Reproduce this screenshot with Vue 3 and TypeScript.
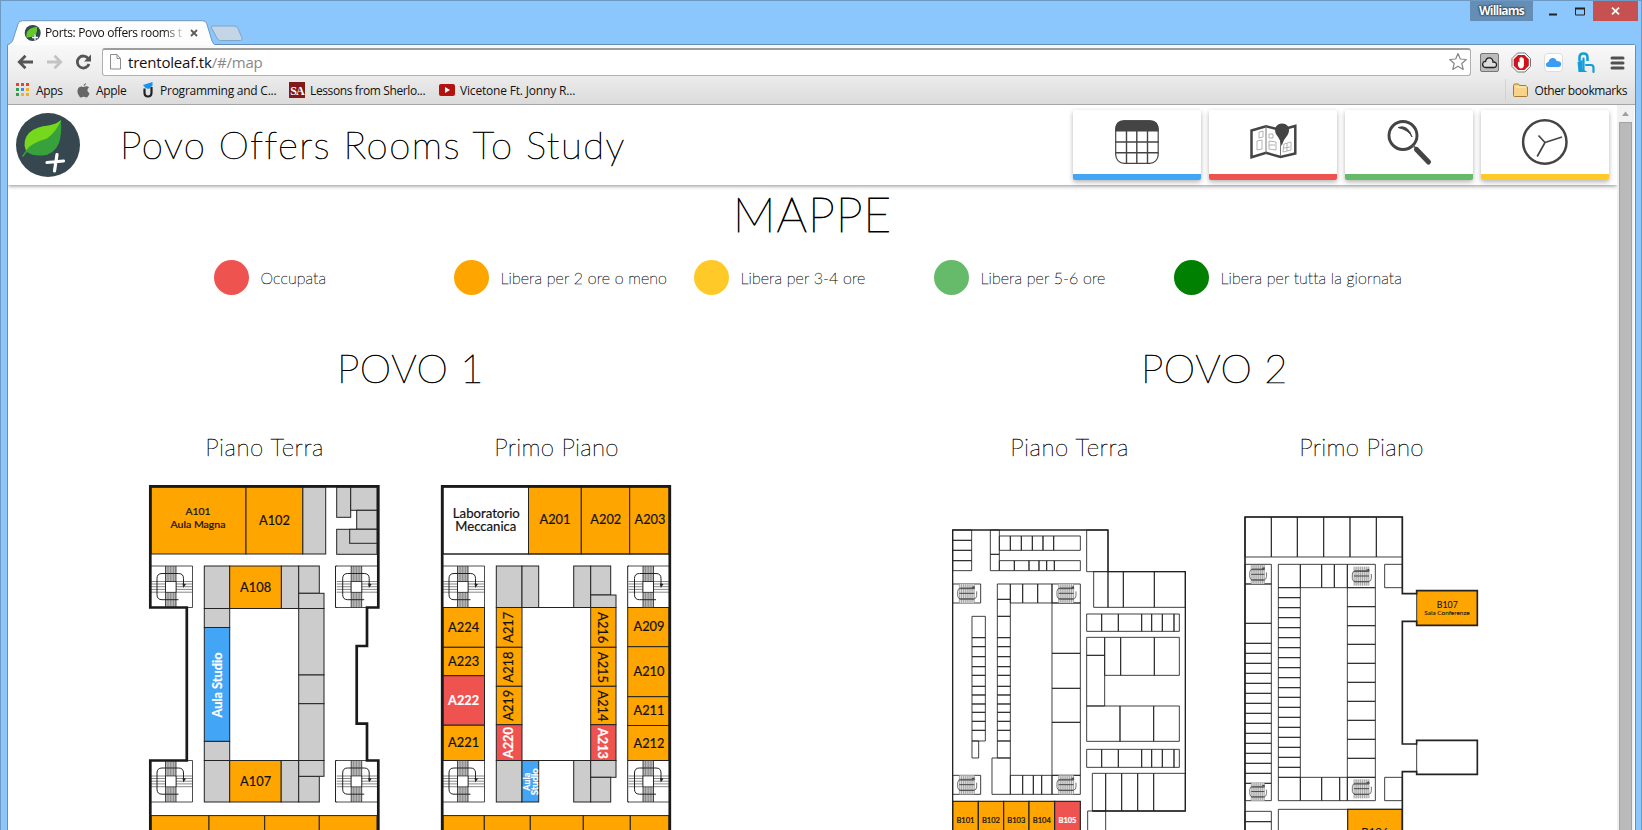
<script setup lang="ts">
type Box = [number, number, number, number]
interface Label {
  t: string
  x: number
  y: number
  w: number
  s?: number
  r?: number
  c?: string
}
interface Fill {
  b: Box
  k: string
}

const legend = [
  { k: 'red', t: 'Occupata' },
  { k: 'orange', t: 'Libera per 2 ore o meno' },
  { k: 'yellow', t: 'Libera per 3-4 ore' },
  { k: 'lime', t: 'Libera per 5-6 ore' },
  { k: 'green', t: 'Libera per tutta la giornata' },
]

const fills = (k: string, list: Box[]): Fill[] => list.map((b) => ({ b, k }))

/* Splits a strip into adjoining boxes at the given stops. */
const rows = (x1: number, x2: number, ys: number[]): Box[] =>
  ys.slice(1).map((y, i) => [x1, ys[i], x2, y] as Box)
const cols = (y1: number, y2: number, xs: number[]): Box[] =>
  xs.slice(1).map((x, i) => [xs[i], y1, x, y2] as Box)
const path = (list: Box[]): string =>
  list.map(([a, b, c, d]) => `M${a} ${b}H${c}V${d}H${a}Z`).join('')

/* Povo 1, ground floor */
const a0: Fill[] = [
  ...fills('grey', [
    [302.7, 487, 325.7, 554], [336.7, 487, 350.7, 517.3], [350.7, 487, 377, 510.3],
    [356.7, 510.3, 377, 529.3], [336.7, 529.3, 377, 554.3], [349.7, 529.3, 377, 543.3],
    [204.3, 566, 229.7, 608.5], [281.3, 566, 298.7, 608.5], [298.7, 566, 319.3, 593.3],
    [204.3, 608.5, 229.7, 627.5], [204.3, 741.3, 229.7, 760.5], [204.3, 760.5, 229.7, 802],
    [281, 760.5, 298.7, 802], [298.7, 776.3, 319.3, 802],
    ...rows(298.7, 324, [593.3, 608.5, 675, 703.7, 760.5, 776.3]),
  ]),
  ...fills('orange', [
    [151, 487, 246, 554], [246, 487, 302.7, 554], [229.7, 566, 281.3, 608.5],
    [229.7, 760.5, 281, 802], ...cols(815.6, 840, [151, 209, 264.7, 319.3, 377]),
  ]),
  ...fills('blue', [[204.3, 627.5, 229.7, 741.3]]),
]
const a0Labels: Label[] = [
  { t: 'A101', x: 198, y: 515, w: 25, s: 10 },
  { t: 'Aula Magna', x: 198, y: 528.3, w: 55, s: 10 },
  { t: 'A102', x: 274.5, y: 525.2, w: 31 },
  { t: 'A108', x: 255.6, y: 592.2, w: 31 },
  { t: 'A107', x: 255.6, y: 786.2, w: 31 },
  { t: 'Aula Studio', x: 222, y: 685, w: 65, r: -90, c: 'lit' },
]

/* Povo 1, first floor */
const inner = [607.5, 647.3, 686.3, 724.7]
const a1: Fill[] = [
  ...fills('grey', [
    [496.3, 566, 522, 607.5], [522, 566, 538.7, 607.5], [573.7, 566, 590.7, 607.5],
    [590.7, 566, 610.7, 595], [590.7, 595, 616, 607.5], [496.3, 760.5, 522, 802],
    [573.7, 760.5, 590.7, 802], [590.7, 760.5, 616, 777.3], [590.7, 777.3, 610.7, 802],
  ]),
  ...fills('white', [[443, 487, 528.5, 554]]),
  ...fills('orange', [
    ...cols(487, 554, [528.5, 581.3, 629.7, 669]),
    ...rows(443, 484.5, [607.5, 647.3, 675.7]), [443, 725, 484.5, 760.5],
    ...rows(496.3, 522, inner), ...rows(590.7, 616, inner),
    ...rows(627.7, 669, [607.5, 646.7, 696.7, 725.5, 760.5]),
    ...cols(815.6, 840, [443, 484.3, 530.3, 583.3, 630.3, 669]),
  ]),
  ...fills('red', [[443, 675.7, 484.5, 725], [496.3, 724.7, 522, 760.5], [590.7, 724.7, 616, 760.5]]),
  ...fills('blue', [[522, 760.5, 538.7, 802]]),
]
const a1Labels: Label[] = [
  { t: 'Laboratorio', x: 486.3, y: 518, w: 67, s: 13.4 },
  { t: 'Meccanica', x: 485.8, y: 530.6, w: 61, s: 13.4 },
  { t: 'A201', x: 555, y: 523.9, w: 31 },
  { t: 'A202', x: 605.8, y: 523.9, w: 31 },
  { t: 'A203', x: 650, y: 523.9, w: 31 },
  { t: 'A224', x: 463.6, y: 632, w: 31 },
  { t: 'A223', x: 463.6, y: 666, w: 31 },
  { t: 'A222', x: 463.6, y: 704.7, w: 31, c: 'lit' },
  { t: 'A221', x: 463.6, y: 746.8, w: 31 },
  { t: 'A209', x: 649, y: 631, w: 31 },
  { t: 'A210', x: 649, y: 676, w: 31 },
  { t: 'A211', x: 649, y: 715, w: 31 },
  { t: 'A212', x: 649, y: 747.8, w: 31 },
  { t: 'A217', x: 513, y: 627.3, w: 31, r: -90 },
  { t: 'A218', x: 513, y: 667, w: 31, r: -90 },
  { t: 'A219', x: 513, y: 705.3, w: 31, r: -90 },
  { t: 'A220', x: 513, y: 742.7, w: 31, r: -90, c: 'lit' },
  { t: 'A216', x: 598.3, y: 627.7, w: 31, r: 90 },
  { t: 'A215', x: 598.3, y: 667.5, w: 31, r: 90 },
  { t: 'A214', x: 598.3, y: 706, w: 31, r: 90 },
  { t: 'A213', x: 598.3, y: 743.5, w: 31, r: 90, c: 'lit' },
  { t: 'Aula', x: 530.3, y: 781.7, w: 18, s: 9.5, r: -90, c: 'lit' },
  { t: 'Studio', x: 538, y: 781.7, w: 27, s: 9.5, r: -90, c: 'lit' },
]

/* Povo 2 plans are drawn on a grid of a third of a pixel. */
const spine = [289, 353, 380, 410, 440, 466, 499, 525, 552, 577, 604, 631, 663]
const strip = [440, 485, 535, 605, 635, 667, 702, 718]
const b0 = path([
  ...rows(38, 95, [30, 61, 91, 122, 152]),
  ...rows(151, 178, [30, 103, 152]),
  ...cols(48, 91, [178, 211, 244, 277, 309, 341, 421]),
  ...cols(122, 152, [178, 223, 267, 297, 320, 343, 421]),
  [440, 30, 504, 155],
  ...cols(155, 262, [461, 504, 550, 643, 736]),
  [38, 192, 122, 249],
  ...rows(172, 211, [192, 238, ...spine, 714]),
  ...cols(192, 249, [211, 248, 293, 336, 421]),
  ...rows(336, 421, [249, 400, 505, 607, 766, 823]),
  ...rows(96, 136, spine),
  [96, 663, 116, 714], [156, 714, 211, 823], [38, 766, 122, 823],
  ...cols(766, 823, [211, 248, 280, 305, 336]),
  ...cols(282, 334, strip), ...cols(688, 742, strip),
  ...cols(352, 466, [494, 542, 643, 718]),
  ...rows(440, 494, [352, 406, 558]),
  ...cols(558, 664, [440, 540, 641, 718]),
  ...cols(760, 873, [457, 497, 545, 593, 641, 736]),
  [443, 873, 497, 960],
])
const b0Rooms = cols(844, 960, [38, 115, 191, 267, 344, 421])

const cells: number[] = []
for (let y = 248; y <= 818; y += 29.95) cells.push(Math.round(y))
const b1 = path([
  ...cols(36, 156, [30, 109, 187, 266, 345, 424, 502]),
  ...rows(30, 109, [178, 237, 355, 415, 445, 475, 505, 535, 565, 595, 625, 655, 685, 715, 745, 775, 805, 835, 887]),
  ...rows(30, 109, [919, 950, 990]),
  ...rows(130, 196, [178, ...cells, 887]),
  ...cols(178, 248, [196, 260, 298, 337, 421]),
  [449, 178, 502, 248], [449, 817, 502, 887],
  ...rows(337, 421, [248, 305, 362, 418, 475, 532, 589, 646, 703, 760, 817]),
  ...cols(817, 887, [196, 260, 314, 337, 421]),
  [130, 913, 502, 990],
])

const stripes = [0, 1, 2, 3, 4, 5, 6, 7]
</script>

<template>
  <div class="window">
    <header class="frame">
      <svg class="tabs" width="260" height="45" viewBox="0 0 260 45">
        <path d="M211.5 28q-.5-2 1.500-2H234q3 0 4 2.500L242 38q.8 2.500-1.500 2.500H220.500q-2.500 0-3.500-2.500Z" fill="#c4d6e6" stroke="#7fa5c8" />
        <path d="M6 45.500Q11 44 12.500 41L18 24q1-3.300 4.500-3.300H202.500q3.300 0 4.300 3L212 41q1 3.500 5 4.500Z" fill="#fdfdfd" stroke="#6e97bd" />
        <circle cx="32.700" cy="33" r="8" fill="#37474f" />
        <path d="M26.500 36.500q-1-8.500 10.500-9.500q1 9-6 10Q28 37 26.500 38Z" fill="#63c92a" />
        <path d="M32 37.500h6M35 34.500v6" stroke="#fff" stroke-width="1.300" />
        <path d="M191 30l6 6M197 30l-6 6" stroke="#5a5a5a" stroke-width="1.800" />
      </svg>
      <span class="tab-title">Ports: Povo offers rooms t</span>
      <div class="controls">
        <span class="user">Williams</span>
        <svg width="60" height="20" viewBox="0 0 60 20">
          <path d="M16 13.500h8" stroke="#222" stroke-width="2" />
          <path d="M42.500 7.500h9v6.500h-9z" fill="none" stroke="#222" /><path d="M42 7.500h10" stroke="#222" stroke-width="2" />
        </svg>
        <span class="close">
          <svg width="9" height="8" viewBox="0 0 9 8"><path d="M1 .7l7 6.600M8 .7L1 7.300" stroke="#fff" stroke-width="1.800" /></svg>
        </span>
      </div>
    </header>

    <div class="shell">
      <div class="toolbar">
        <svg width="92" height="28" viewBox="8 0 92 28">
          <g fill="none" stroke-width="2.800">
            <path d="M33 14H20M25.500 7.800L19.300 14l6.200 6.200" stroke="#555" />
            <path d="M47 14H60M54.500 7.800L60.700 14l-6.200 6.200" stroke="#c3c3c3" />
            <path d="M88.200 10.500A6 6 0 1 0 89 16" stroke="#555" />
          </g>
          <path d="M91 6.500v7h-7z" fill="#555" />
        </svg>
        <div class="omni">
          <svg width="13" height="18" viewBox="0 0 13 18"><path d="M1.500 1.500h6.500l3.500 4v10.500h-10zM8 1.500v4h3.500" fill="#fcfcfc" stroke="#8c8c8c" /></svg>
          <span class="url">trentoleaf.tk<i>/#/map</i></span>
          <svg width="20" height="19" viewBox="0 0 20 19"><path d="M10 1.500l2.300 5.500 6 .5-4.500 4 1.400 5.900L10 14.200l-5.200 3.200 1.400-5.900-4.500-4 6-.5z" fill="#fff" stroke="#888" stroke-width="1.200" stroke-linejoin="round" /></svg>
        </div>
        <svg class="ext" width="160" height="24" viewBox="1474 0 160 24">
          <rect x="1480.500" y="2.500" width="18" height="18" rx="1.500" fill="#bcbcbc" stroke="#777" />
          <path d="M1484 16q-2.500-2-.5-5 1.500-.8 2-.5 1-4.500 5-3.500 2.500 1 2.500 4 4 0 3.500 3.500-.5 2-2.500 2h-8q-1 0-2-.5Z" fill="#ddd" stroke="#222" stroke-width="1.300" />
          <path d="M1517.500 2h7.500l5.500 5.500v8l-5.500 5.500h-7.500l-5.500-5.500v-8z" fill="#fff" stroke="#777" />
          <path d="M1518 4h6.500l4.300 4.300v6.400l-4.300 4.300H1518l-4.300-4.300V8.300z" fill="#d3131b" />
          <path d="M1518 10.500l1.500 1v-4.500h1v3.500V6h1.200v4.500V6.500h1v4V7.500h1.200v7q-.5 3-3 3-2 0-3-3z" fill="#fff" />
          <rect x="1544.500" y="2.500" width="18" height="18" rx="3.500" fill="#fff" stroke="#ddd" />
          <path d="M1547.500 16q-2-.5-1.500-3 .8-2 2.500-2 1-4.500 5-4 2.500.7 3.200 3 4.500 0 4.500 3.300 0 2.500-2.500 2.700z" fill="#3b9cf4" />
          <path d="M1579.500 10V6.500q0-4 4-4t4 4V10" fill="none" stroke="#159ddb" stroke-width="2.600" />
          <path d="M1583.500 19V7.500M1586 14h5q2.500 0 2.500 3V21" fill="none" stroke="#159ddb" stroke-width="2.200" stroke-linecap="round" />
          <path d="M1577.500 11l5-2v9l5 3h-9z" fill="#159ddb" />
          <path d="M1612 7h11M1612 12h11M1612 17h11" stroke="#505050" stroke-width="3" stroke-linecap="round" />
        </svg>
      </div>

      <div class="marks">
        <span class="mark m1">
          <svg width="14" height="14" viewBox="0 0 14 14">
            <path d="M0 0h3v3H0zM5 0h3v3H5zM10 0h3v3h-3z" fill="#e2443a" />
            <path d="M0 5h3v3H0z" fill="#2f9e4f" /><path d="M5 5h3v3H5z" fill="#3f86ee" /><path d="M10 5h3v3h-3z" fill="#f2b01e" />
            <path d="M0 10h3v3H0z" fill="#2f9e4f" /><path d="M5 10h3v3H5zM10 10h3v3h-3z" fill="#f2b01e" />
          </svg><b>Apps</b>
        </span>
        <span class="mark m2">
          <svg width="13" height="15" viewBox="0 0 13 15"><path d="M6.500 4Q8.500 3 10 3.300q1.500.3 2 1.300-3.500 2.500.5 5.900-1 3-2.700 4-1 0-1.800-.4-1.300-.6-2.700 0-1.500.8-2.500-.2Q-1 9.500 1.300 5q2-2.500 5.200-1ZM6.500 3.300Q6.500.8 9 0 9 2.500 6.500 3.300Z" fill="#666" /></svg><b>Apple</b>
        </span>
        <span class="mark m3">
          <svg width="12" height="16" viewBox="0 0 12 16"><path d="M2.500 6.500v4q0 4 3.500 4t3.500-4V5" fill="none" stroke="#222" stroke-width="2.200" /><path d="M1 3L10.500 0v3.500L7 7 3.500 6z" fill="#1793ee" /></svg><b>Programming and C...</b>
        </span>
        <span class="mark m4"><em>SA</em><b>Lessons from Sherlo...</b></span>
        <span class="mark m5">
          <svg width="16" height="12" viewBox="0 0 16 12"><rect width="16" height="12" rx="2" fill="#b3120e" /><path d="M6 3l5 3-5 3z" fill="#fff" /></svg><b>Vicetone Ft. Jonny R...</b>
        </span>
        <span class="mark other">
          <svg width="16" height="14" viewBox="0 0 16 14"><path d="M.5 12.500V2.500Q.5 1 2 1h3.500l1 1.500H13V4h1.500v8.500q0 1-1 1h-12q-1 0-1-1z" fill="#f7d387" stroke="#a87b35" /><path d="M3 4h11" stroke="#fff0c4" /></svg><b>Other bookmarks</b>
        </span>
      </div>

      <div class="body">
        <main class="page">
          <div class="banner">
            <svg class="logo" width="64" height="64" viewBox="0 0 64 64">
              <circle cx="32" cy="32" r="32" fill="#37474f" />
              <path d="M6 43L10 37.500Q6 28 13 20 21 13 33 12.500 41 11 45 7 46 20 43 30 38 42 26 42.500 16 43 11 39L7 44Z" fill="#37a23c" />
              <path d="M10 37.500Q6 28 13 20 21 13 33 12.500 41 11 45 7 41 18 31 25.500 15 30 10 37.500Z" fill="#76d81c" />
              <path d="M31 49.500l16.500-1.500M41 41.500l-2.500 16.500" stroke="#fff" stroke-width="3.200" stroke-linecap="round" />
            </svg>
            <h1>Povo Offers Rooms To Study</h1>
            <nav>
              <a class="n-blue"><svg width="128" height="64" viewBox="0 0 128 64">
                <rect x="42.700" y="10.800" width="42.500" height="42.500" rx="8.500" fill="#fff" stroke="#444" stroke-width="1.200" />
                <path d="M42.200 21.500v-2q0-9.200 9-9.200h25.500q9 0 9 9.200v2z" fill="#444" />
                <path d="M53.500 21v32M63.800 21v32M74.500 21v32M42.500 32h43M42.500 42.700h43" stroke="#444" stroke-width="1.400" />
              </svg></a>
              <a class="n-red"><svg width="128" height="64" viewBox="0 0 128 64">
                <path d="M42.500 20.500L57 16.300 71.500 20 86.300 16v27.500L71.500 47 57 42.800l-14.500 4.400z" fill="#fff" stroke="#444" stroke-width="2.500" />
                <path d="M57 16v27M71.500 30v16" stroke="#777" />
                <path d="M50 22l4-1v6l-4 1zM60 24h4v4h-4zM48 31l5-1v9l-5 1zM60 31l7 1v8l-7-1zM60 35h6M75 34l7-2v8l-8 2zM78 33v8M75 38l6-1" fill="none" stroke="#aaa" stroke-width=".9" />
                <path d="M72.600 36q-1.500-7-5-11-3-5-.5-8.500 2-3 6-3t6 3q2 4-.5 8.500-4.500 5-6 11z" fill="#444" />
              </svg></a>
              <a class="n-green"><svg width="128" height="64" viewBox="0 0 128 64">
                <circle cx="58" cy="25.500" r="14" fill="none" stroke="#444" stroke-width="2.900" />
                <path d="M53 17.500Q63 14 67 27q-3-7-14-9.500z" fill="#444" stroke="#444" stroke-linejoin="round" />
                <path d="M68 35.500l3 3" stroke="#666" stroke-width="2" /><path d="M71.500 39.500L83.500 52" stroke="#444" stroke-width="5" stroke-linecap="round" />
              </svg></a>
              <a class="n-yellow"><svg width="128" height="64" viewBox="0 0 128 64">
                <circle cx="63.800" cy="32" r="21.700" fill="none" stroke="#444" stroke-width="2.500" />
                <path d="M64 32.500l17-5.500M64 32.500l-6.500-7M64 32.500l-7.800 14" stroke="#444" stroke-width="1.700" />
              </svg></a>
            </nav>
          </div>

          <h2>MAPPE</h2>
          <ul class="legend">
            <li v-for="l in legend" :key="l.k"><i :class="'dot-' + l.k"></i>{{ l.t }}</li>
          </ul>

          <div class="buildings">
            <section>
              <h3>POVO 1</h3>
              <div class="floors">
                <figure>
                  <figcaption>Piano Terra</figcaption>
                  <svg class="plan" width="292" height="355" viewBox="118 475 292 355">
                    <defs>
                      <symbol id="stairs" width="42" height="42" viewBox="0 0 42 42" overflow="visible">
                        <path d="M14.500 0H25v41.500H14.500z" fill="#b5b5b5" />
                        <path d="M17 0v41.500M19.700 0v41.500M22.400 0v41.500" stroke="#777" stroke-width=".7" />
                        <path d="M0 15.500h14.500M25 15.500h16.500M0 18h14.500M25 18h16.500M0 20.700h14.500M25 20.700h16.500M0 23.400h14.500M25 23.400h16.500M0 26.200h14.500M25 26.200h16.500" stroke="#555" stroke-width=".7" />
                        <path d="M14.500 15.500H25v10.800H14.500zM25 0v41.500M14.500 0v41.500M0 0h41.500v41.500H0" fill="none" stroke="#222" stroke-width=".8" />
                        <path d="M15 16h9.500v9.800H15z" fill="#fff" />
                        <path d="M27.500 33.700H11q-5 0-5-5V12.500q0-5 5-5h16.500q5 0 5 5V20" fill="none" stroke="#222" />
                        <path d="M31.500 17.500l.8 4.500 2.700-4z" fill="#222" />
                      </symbol>
                      <symbol id="steps" width="84" height="58" viewBox="0 0 84 58" overflow="visible">
                        <path d="M20 0h45v57H20z" fill="#ddd" />
                        <path v-for="n in stripes" :key="n" :d="`M${20 + n * 6.400} 0v57`" stroke="#888" stroke-width="2" />
                        <path d="M20 14h45M20 28h45M20 45h45" stroke="#333" stroke-width="2.600" />
                        <path d="M62 12H24q-9 2-9 10v14q1 8 9 9h40q8-2 8-10V22" fill="none" stroke="#555" stroke-width="2.500" />
                        <path d="M56 10l11 4-2-8z" fill="#444" />
                      </symbol>
                    </defs>
                    <rect v-for="(f, i) in a0" :key="i" :class="['cell', f.k]" :x="f.b[0]" :y="f.b[1]" :width="f.b[2] - f.b[0]" :height="f.b[3] - f.b[1]" />
                    <use href="#stairs" x="151" y="566" /><use href="#stairs" x="336.700" y="566" />
                    <use href="#stairs" x="151" y="760.500" /><use href="#stairs" x="336.700" y="760.500" />
                    <path class="thin" d="M337 566H335.500V607.500H337M337 760.500H335.500V802H337" />
                    <path class="wall" d="M150.300 840V760.500H186.800V607.500H150.300V486.300H378.300V607.500H367V646H356.700V723.700H367V760.500H378.300V840" />
                    <text v-for="l in a0Labels" :key="l.t" :class="l.c" :font-size="l.s ?? 14" :textLength="l.w" lengthAdjust="spacingAndGlyphs" :transform="`translate(${l.x} ${l.y}) rotate(${l.r ?? 0})`">{{ l.t }}</text>
                  </svg>
                </figure>
                <figure>
                  <figcaption class="first">Primo Piano</figcaption>
                  <svg class="plan" width="292" height="355" viewBox="410 475 292 355">
                    <rect v-for="(f, i) in a1" :key="i" :class="['cell', f.k]" :x="f.b[0]" :y="f.b[1]" :width="f.b[2] - f.b[0]" :height="f.b[3] - f.b[1]" />
                    <path class="thin" d="M443 554H669M538 607.500H574M538 760.500H574M629 566H627.700V607.500M627.700 760.500V802H629" />
                    <use href="#stairs" x="443" y="566" /><use href="#stairs" x="628.500" y="566" />
                    <use href="#stairs" x="443" y="760.500" /><use href="#stairs" x="628.500" y="760.500" />
                    <path class="wall" d="M442.200 840V486.300H669.800V840" />
                    <text v-for="l in a1Labels" :key="l.t" :class="l.c" :font-size="l.s ?? 14" :textLength="l.w" lengthAdjust="spacingAndGlyphs" :transform="`translate(${l.x} ${l.y}) rotate(${l.r ?? 0})`">{{ l.t }}</text>
                  </svg>
                </figure>
              </div>
            </section>

            <section>
              <h3>POVO 2</h3>
              <div class="floors">
                <figure>
                  <figcaption>Piano Terra</figcaption>
                  <svg class="plan" width="292" height="355" viewBox="923 475 292 355">
                    <g transform="translate(940 520) scale(.33333)">
                      <path class="grid" :d="b0" />
                      <rect v-for="(b, i) in b0Rooms" :key="i" :class="['room', i === 4 ? 'red' : 'orange']" :x="b[0]" :y="b[1]" :width="b[2] - b[0]" :height="b[3] - b[1]" />
                      <use href="#steps" x="38" y="192" /><use href="#steps" x="336" y="192" />
                      <use href="#steps" x="38" y="766" /><use href="#steps" x="336" y="766" />
                      <path class="edge" d="M38 960V30H504V155H736V873H457" />
                      <text v-for="(b, i) in b0Rooms" :key="'t' + i" :class="['small', { lit: i === 4 }]" font-size="23" textLength="54" lengthAdjust="spacingAndGlyphs" :x="(b[0] + b[2]) / 2" y="908">B10{{ i + 1 }}</text>
                    </g>
                  </svg>
                </figure>
                <figure>
                  <figcaption class="first">Primo Piano</figcaption>
                  <svg class="plan" width="292" height="355" viewBox="1215 475 292 355">
                    <g transform="translate(1235 505) scale(.33333)">
                      <path class="grid" :d="b1" />
                      <rect class="room orange" x="338" y="913" width="164" height="80" />
                      <rect class="orange" x="545" y="257" width="182" height="104" />
                      <use href="#steps" transform="translate(31 180) scale(.88 1)" /><use href="#steps" x="337" y="185" />
                      <use href="#steps" transform="translate(31 833) scale(.88 .95)" /><use href="#steps" x="337" y="823" />
                      <path class="edge thick" d="M30 990V36H502V266H545V257H727V361H545V349H502V717H545V706H727V808H545V800H502V990" />
                      <path class="grid" d="M545 266V349M545 717V800" />
                      <text font-size="29" textLength="63" lengthAdjust="spacingAndGlyphs" x="637" y="309">B107</text>
                      <text font-size="17" textLength="136" lengthAdjust="spacingAndGlyphs" x="636" y="330">Sala Conferenze</text>
                      <text font-size="36" textLength="82" lengthAdjust="spacingAndGlyphs" x="420" y="993">B106</text>
                    </g>
                  </svg>
                </figure>
              </div>
            </section>
          </div>
        </main>
        <aside class="scroll">
          <svg width="17" height="17" viewBox="0 0 17 17"><path d="M5 11l3.500-4.500L12 11z" fill="#a0a0a0" /></svg>
          <i></i>
        </aside>
      </div>
    </div>
  </div>
</template>

<style>
html, body { margin: 0; overflow: hidden; }
</style>

<style scoped>
.window { box-sizing: border-box; width: 1642px; height: 830px; overflow: hidden; background: #8bc6fc; border: solid #6d99c2; border-width: 1px 1px 0; font-family: "Open Sans", "Noto Sans", sans-serif; }
.frame { display: flex; position: relative; height: 43px; }
.tabs { position: absolute; left: -1px; top: -1px; z-index: 2; }
.tab-title { position: absolute; z-index: 3; left: 44px; top: 23px; width: 139px; overflow: hidden; white-space: nowrap; font-size: 12px; line-height: 18px; letter-spacing: -.35px; color: #111; -webkit-mask-image: linear-gradient(90deg, #000 118px, transparent 142px); mask-image: linear-gradient(90deg, #000 118px, transparent 142px); }
.controls { display: flex; height: 20px; margin-left: auto; margin-right: 3px; }
.user { width: 63px; background: #648eb5; color: #fff; font-size: 12px; font-weight: 700; line-height: 19px; text-align: center; letter-spacing: -.8px; text-shadow: 0 0 2px #123, 0 0 2px #123; }
.close { display: flex; align-items: center; justify-content: center; width: 45px; background: #c75050; }
.shell { box-sizing: border-box; width: 1629px; height: 786px; margin-left: 6px; border: solid #648db3; border-width: 1px 1px 0; border-radius: 3px 3px 0 0; background: #fff; }
.toolbar { display: flex; align-items: center; height: 34px; background: linear-gradient(#f9f9f9, #ebebeb); }
.omni { box-sizing: border-box; display: flex; align-items: center; width: 1369px; height: 28px; margin-left: 2px; padding: 0 2px 2px 6px; border: 1px solid #b0b0b0; border-top: 2px solid #9d9d9d; border-radius: 3px; background: #fff; }
.url { flex: 1; margin-left: 6px; font-size: 15px; letter-spacing: -.2px; line-height: 22px; color: #111; }
.url i { font-style: normal; color: #888; }
.ext { margin-left: 3px; margin-top: 2px; flex: none; }
.marks { box-sizing: border-box; display: flex; align-items: center; height: 26px; padding: 0 8px 3px; border-bottom: 1px solid #a6a6a6; background: linear-gradient(#eaeaea, #dbdbdb); }
.mark { display: flex; align-items: center; height: 22px; white-space: nowrap; font-size: 12px; color: #111; letter-spacing: -.35px; }
.mark b { font-weight: 400; }
.mark svg { flex: none; }
.mark em { width: 16px; height: 16px; background: #821919; color: #fff; font: bold 12px/19px "Liberation Serif", serif; text-align: center; letter-spacing: -.8px; }
.m1 { width: 61px; } .m1 b { margin-left: 6px; }
.m2 { width: 65px; } .m2 b { margin-left: 6px; }
.m3 { width: 147px; letter-spacing: -.24px; } .m3 b { margin-left: 6px; }
.m4 { width: 150px; letter-spacing: -.38px; } .m4 b { margin-left: 5px; }
.m5 { letter-spacing: -.18px; } .m5 b { margin-left: 5px; }
.other { margin-left: auto; padding-left: 7px; border-left: 1px solid #cdd5dc; letter-spacing: -.4px; } .other b { margin-left: 5px; }
.body { display: flex; height: 726px; }
.page { width: 1609px; height: 726px; overflow: hidden; font-family: Lato, sans-serif; font-weight: 100; color: #000; }
.banner { display: flex; height: 80px; box-shadow: 0 1px 4px rgba(0, 0, 0, .45); }
.logo { margin: 8px 0 0 8px; }
h1 { width: 520px; margin: 0 0 0 40px; font-size: 38.400px; font-weight: 100; line-height: 78px; letter-spacing: 1.480px; white-space: nowrap; -webkit-text-stroke: .65px #000; }
nav { display: flex; gap: 8px; margin: 5px 8px 0 auto; }
nav a { display: block; width: 128px; height: 64px; border-bottom: 6px solid; border-radius: 2px; box-shadow: 0 2px 5px rgba(0, 0, 0, .3); background: #fff; }
.n-blue { border-color: #42a5f5; } .n-red { border-color: #ef5350; } .n-green { border-color: #66bb6a; } .n-yellow { border-color: #ffca28; }
h2 { margin: 0; height: 60px; font-size: 48px; font-weight: 100; line-height: 58px; letter-spacing: .9px; text-align: center; -webkit-text-stroke: .8px #000; }
.legend { display: flex; width: 1200px; margin: 15px auto 0; padding: 0 0 0 2px; list-style: none; }
.legend li { display: flex; align-items: center; width: 240px; height: 35px; font-size: 16px; line-height: 35px; letter-spacing: .08px; white-space: nowrap; -webkit-text-stroke: .3px #000; }
.legend i { width: 35px; height: 35px; margin-right: 12px; border-radius: 50%; }
.dot-red { background: #ef5350; } .dot-orange { background: #ffa500; } .dot-yellow { background: #ffca28; } .dot-lime { background: #66bb6a; } .dot-green { background: green; }
.buildings { display: flex; margin-top: 49px; }
section { width: 804px; flex: none; }
h3 { margin: 0; height: 50px; font-size: 40px; font-weight: 100; line-height: 48px; letter-spacing: .5px; text-indent: 1px; text-align: center; -webkit-text-stroke: .65px #000; }
.floors { display: flex; width: 584px; margin: 0 auto; }
section:last-child .floors { margin-left: 111px; }
figure { margin: 0; width: 292px; }
figcaption { height: 49px; margin-top: 32px; font-size: 24px; line-height: 42px; letter-spacing: .55px; text-indent: 1px; text-align: center; -webkit-text-stroke: .4px #000; }
figcaption.first { letter-spacing: .3px; }
.plan { display: block; }
.plan text { font-family: Lato, sans-serif; font-weight: 400; text-anchor: middle; fill: #111; stroke: #111; stroke-width: .2px; }
.plan text.lit { font-weight: 700; fill: #fff; stroke: #fff; }
.plan text.small { stroke-width: .7px; }
.cell { stroke: #222; stroke-width: 1px; }
.room { stroke: #222; stroke-width: 3.500px; }
.grey { fill: #ccc; } .orange { fill: #ffa500; } .red { fill: #ef5350; } .blue { fill: #42a5f5; } .white { fill: #fff; }
.wall { fill: none; stroke: #1a1a1a; stroke-width: 2.700px; }
.thin { fill: none; stroke: #222; }
.grid { fill: none; stroke: #222; stroke-width: 2.600px; }
.edge { fill: none; stroke: #222; stroke-width: 4px; }
.edge.thick { stroke-width: 5px; }
.scroll { width: 17px; flex: none; background: #f1f1f1; }
.scroll svg { display: block; }
.scroll i { display: block; box-sizing: border-box; width: 13px; height: 720px; margin-left: 2px; background: #bababa; border: 1px solid #a3a3a3; }
</style>
